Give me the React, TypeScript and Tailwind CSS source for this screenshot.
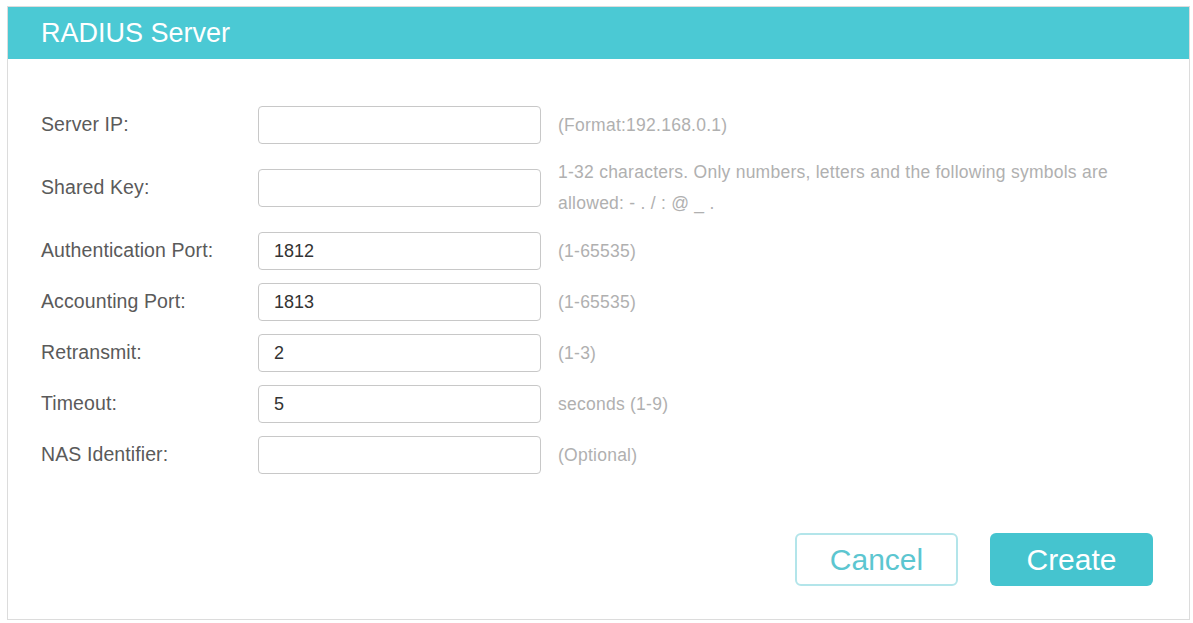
const rows: { label: string; value: string; hint: string[] }[] = [
  { label: "Server IP:", value: "", hint: ["(Format:192.168.0.1)"] },
  {
    label: "Shared Key:",
    value: "",
    hint: [
      "1-32 characters. Only numbers, letters and the following symbols are",
      "allowed: - . / : @ _ .",
    ],
  },
  { label: "Authentication Port:", value: "1812", hint: ["(1-65535)"] },
  { label: "Accounting Port:", value: "1813", hint: ["(1-65535)"] },
  { label: "Retransmit:", value: "2", hint: ["(1-3)"] },
  { label: "Timeout:", value: "5", hint: ["seconds (1-9)"] },
  { label: "NAS Identifier:", value: "", hint: ["(Optional)"] },
];

export default function App() {
  return (
    <div className="h-[623px] w-full bg-white pb-[3px] pl-[7px] pr-[3px] pt-[6px] font-['Liberation_Sans',Arial,sans-serif]">
      <div className="flex h-full flex-col border border-[#dcdcdc]">
        <div className="flex h-[52px] items-center bg-[#4bc9d4] pl-[33px]">
          <h1 className="text-[27px] leading-none text-white">RADIUS Server</h1>
        </div>

        <div className="flex flex-col gap-[13px] pl-[33px] pt-[47px]">
          {rows.map((row) => (
            <div key={row.label} className="flex items-center">
              <label className="w-[217px] text-[19.5px] tracking-[0.1px] text-[#5a5a5a]">
                {row.label}
              </label>
              <input
                type="text"
                defaultValue={row.value}
                className="h-[38px] w-[283px] rounded-[4px] border border-[#c8c8c8] bg-white px-[15px] text-[18px] text-[#333] outline-none"
              />
              <div className="ml-[17px] text-[17.5px] leading-[31px] tracking-[0.25px] text-[#b0b0b0]">
                {row.hint.map((line) => (
                  <div key={line}>{line}</div>
                ))}
              </div>
            </div>
          ))}
        </div>

        <div className="mt-auto flex justify-end gap-[32px] pb-[33px] pr-[36px]">
          <button className="h-[53px] w-[163px] rounded-[6px] border-2 border-[#b3e5ea] bg-white text-[30px] text-[#5cc6d0]">
            Cancel
          </button>
          <button className="h-[53px] w-[163px] rounded-[6px] bg-[#45c4cf] text-[30px] text-white">
            Create
          </button>
        </div>
      </div>
    </div>
  );
}
